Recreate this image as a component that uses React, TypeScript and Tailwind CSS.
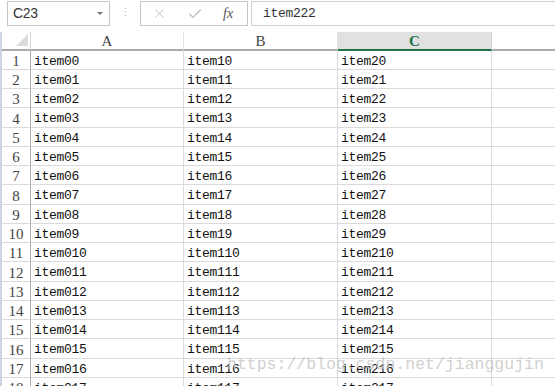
import { X, Check } from 'lucide-react';

const cols = ['A', 'B', 'C'];
const colWidths = ['w-[153px]', 'w-[154px]', 'w-[154px]'];

const rows = Array.from({ length: 18 }, (_, i) => ({
  n: i + 1,
  cells: [`item0${i}`, `item1${i}`, `item2${i}`],
}));

export default function App() {
  return (
    <div className="relative w-[555px] h-[386px] overflow-hidden bg-white" style={{ fontFamily: '"Liberation Mono", monospace' }}>
      {/* Formula bar */}
      <div className="flex items-start h-[32px] pt-px">
        <div className="ml-[7px] w-[103px] h-[25px] border border-[#c6c6c6] flex items-center justify-between pl-[5px] pr-[6px]">
          <span className="text-[14px] text-[#333] tracking-[-0.3px]" style={{ fontFamily: '"Liberation Sans", sans-serif' }}>C23</span>
          <span className="w-0 h-0 border-l-[3px] border-r-[3px] border-t-[3px] border-l-transparent border-r-transparent border-t-[#777]" />
        </div>
        <div className="w-[30px] h-[25px] flex items-center justify-center text-[#b0b0b0] text-[11px] leading-none">⋮</div>
        <div className="w-[108px] h-[25px] border border-[#c6c6c6] flex items-center">
          <X className="ml-[11px] text-[#b4b4b4]" size={15} strokeWidth={1.3} />
          <Check className="ml-[20px] text-[#b4b4b4]" size={16} strokeWidth={1.6} />
          <span className="ml-[20px] text-[14px] italic text-[#555]" style={{ fontFamily: '"Liberation Serif", serif' }}>fx</span>
        </div>
        <div className="ml-[3px] flex-1 h-[25px] border border-r-0 border-[#d0d0d0] flex items-center pl-[11px]">
          <span className="text-[13px] text-[#333] tracking-[-0.3px]">item222</span>
        </div>
      </div>

      {/* Sheet */}
      <div className="border-l-2 border-[#cdd2e4]">
        {/* Column headers */}
        <div className="flex h-[19px]">
          <div className="w-[29px] h-full border-r border-[#d8d8d8] border-b-2 border-b-[#ababab] relative">
            <div className="absolute right-[2px] bottom-[3px] w-0 h-0" style={{ borderBottom: '12px solid #dcdcdc', borderLeft: '12px solid transparent' }} />
          </div>
          {cols.map((c, i) =>
            c === 'C' ? (
              <div key={c} className={`${colWidths[i]} h-full bg-[#e1e1e1] border-r border-[#cfcfcf] border-b-2 border-b-[#217346] flex items-center justify-center pt-[2px] text-[15px] font-bold text-[#217346]`} style={{ fontFamily: '"Liberation Serif", serif' }}>
                {c}
              </div>
            ) : (
              <div key={c} className={`${colWidths[i]} h-full border-r border-[#e2e2e2] border-b-2 border-b-[#ababab] flex items-center justify-center pt-[2px] text-[15px] text-[#444]`} style={{ fontFamily: '"Liberation Serif", serif' }}>
                {c}
              </div>
            )
          )}
          <div className="flex-1 h-full border-b-2 border-b-[#ababab]" />
        </div>

        {/* Rows */}
        {rows.map((r, i) => (
          <div key={r.n} className={`flex ${i % 4 === 3 ? 'h-[20px]' : 'h-[19px]'}`}>
            <div className="w-[29px] h-full border-r border-[#ababab] border-b border-b-[#dadada] flex items-center justify-center pt-[3px] text-[15px] text-[#444]" style={{ fontFamily: '"Liberation Serif", serif' }}>
              {r.n}
            </div>
            {r.cells.map((t, j) => (
              <div key={j} className={`${colWidths[j]} h-full border-r border-b border-[#dadada] flex items-center pl-[3px] pt-[3px] text-[13px] text-[#111] tracking-[-0.3px]`}>
                {t}
              </div>
            ))}
            <div className="flex-1 h-full border-b border-[#dadada]" />
          </div>
        ))}
      </div>

      {/* Watermark */}
      <div className="absolute left-[227px] top-[357px] text-[16.5px] leading-none text-[#c4c4c4]/80 pointer-events-none">
        https://blog.csdn.net/jianggujin
      </div>
    </div>
  );
}
